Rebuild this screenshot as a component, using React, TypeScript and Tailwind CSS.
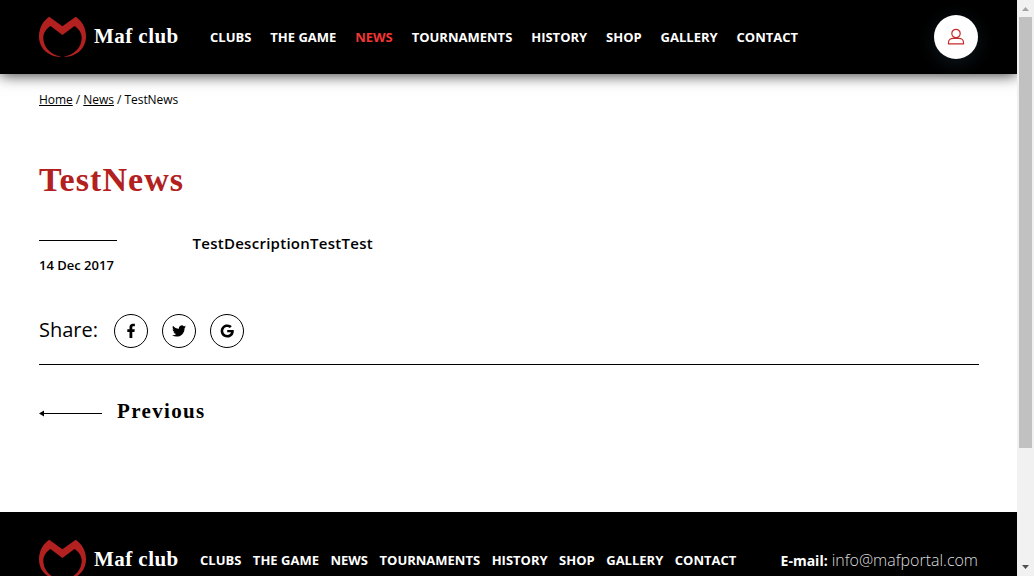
import type { ReactNode } from "react";

const links = ["CLUBS", "THE GAME", "NEWS", "TOURNAMENTS", "HISTORY", "SHOP", "GALLERY", "CONTACT"];

function Logo() {
  return (
    <a className="flex h-[42px] w-[152px] shrink-0 items-center">
      <svg className="h-[42px] w-[47px] shrink-0" viewBox="0 0 47 42" fill="#b22020">
        <path d="M10.2.8 23.4 10.3 36.7.8C43 5 47 12 47 20.500C47 32 38 40.500 25.500 41V40.500C36 38.500 42.700 31 42.700 21.500C42.700 17 39.500 12.500 35.500 10L23.400 19 11.500 10C7.500 12.500 4.300 17 4.300 21.500C4.300 31 11 38.500 21.500 40.500V41C9 40.500 0 32 0 20.500C0 12 4 5 10.200.8Z" />
      </svg>
      <span className="relative -top-px ml-2 whitespace-nowrap font-['Liberation_Serif',serif] text-[21px] leading-[26px] font-bold tracking-[0.45px]">
        Maf club
      </span>
    </a>
  );
}

function ShareButton({ children }: { children: ReactNode }) {
  return (
    <a className="flex size-[34px] items-center justify-center rounded-full border border-black">
      <svg className="size-4" viewBox="0 0 16 16" fill="currentColor">
        {children}
      </svg>
    </a>
  );
}

function Header() {
  return (
    <header className="relative z-10 flex h-[74px] shrink-0 items-center bg-black pr-[39px] pl-[39px] text-white shadow-[0_1px_14px_rgba(0,0,0,0.8)]">
      <Logo />
      <nav className="ml-[19px] flex gap-[18.900px] text-[13px] leading-5 font-bold whitespace-nowrap">
        {links.map((link) => (
          <a key={link} className={link === "NEWS" ? "text-[#f33535]" : "text-white"}>
            {link}
          </a>
        ))}
      </nav>
      <a className="ml-auto flex size-11 items-center justify-center rounded-full bg-white shadow-[0_4px_18px_rgba(55,100,125,0.25)]">
        <svg className="size-[18px]" viewBox="0 0 18 18" fill="none" stroke="#c52b2b" strokeWidth="1.2">
          <circle cx="9" cy="5.500" r="4.200" />
          <path d="M1.500 15.900V14.300C1.500 11.900 3.700 10.300 6 10.300H12C14.300 10.300 16.500 11.900 16.500 14.300V15.900Z" />
        </svg>
      </a>
    </header>
  );
}

function Article() {
  return (
    <main className="flex h-[438px] shrink-0 flex-col pr-[38px] pl-[39px]">
      <div className="mt-4 text-xs leading-5 tracking-[-0.04px]">
        <a className="underline">Home</a> / <a className="underline">News</a> / TestNews
      </div>
      <h1 className="mt-[50px] font-['Liberation_Serif',serif] text-[34px] leading-10 font-bold tracking-[1.05px] text-[#b22020]">
        TestNews
      </h1>
      <div className="mt-[33px] flex h-[60px]">
        <div className="mt-[7px] w-[78px] border-t border-black pt-[14px] text-[13px] leading-5 font-semibold whitespace-nowrap">
          14 Dec 2017
        </div>
        <p className="ml-[75.500px] text-[15px] leading-5 font-semibold tracking-[0.270px]">TestDescriptionTestTest</p>
      </div>
      <div className="mt-[21px] flex h-[51px] items-start border-b border-black">
        <span className="w-[75px] text-[20px] leading-8">Share:</span>
        <div className="flex gap-[14px]">
          <ShareButton>
            <path d="M6.500 15V9H4.300V6.300H6.500V4.300C6.500 2 7.800.8 9.900.8C10.900.8 11.700.9 11.900.9V3.300H10.500C9.500 3.300 9.300 3.800 9.300 4.500V6.300H11.800L11.400 9H9.300V15Z" />
          </ShareButton>
          <ShareButton>
            <path d="M15 3.500C14.500 3.700 14 3.900 13.400 4C14 3.600 14.400 3.100 14.600 2.500C14 2.800 13.400 3.100 12.800 3.200A2.900 2.900 0 0 0 7.900 5.800C5.500 5.700 3.400 4.500 2 2.700C1.200 4.100 1.700 5.800 2.900 6.600C2.400 6.600 2 6.400 1.600 6.200C1.600 7.600 2.600 8.800 3.900 9.100C3.500 9.200 3.100 9.200 2.600 9.100C3 10.200 4 11.100 5.300 11.100C4.100 12.100 2.600 12.500 1 12.300C5.900 15.400 13.600 13 13.600 4.900C14.200 4.500 14.600 4.100 15 3.500Z" />
          </ShareButton>
          <ShareButton>
            <path d="M14.700 6.900H8.200V9.300H12C11.500 11 10.100 12 8.200 12A4 4 0 1 1 10.900 5L12.800 3.200A6.600 6.600 0 1 0 8.200 14.600C12.500 14.600 15.400 11.400 14.700 6.900Z" />
          </ShareButton>
        </div>
      </div>
      <a className="mt-9 flex h-6 items-center font-['Liberation_Serif',serif] text-[21px] font-bold tracking-[1.350px]">
        <svg className="mr-[15px] h-[7px] w-[63px]" viewBox="0 0 63 7">
          <path d="M0 3.500 5 0.500V3H63V4H5V6.500Z" />
        </svg>
        <span className="relative -top-px">Previous</span>
      </a>
    </main>
  );
}

function Footer() {
  return (
    <footer className="flex h-[100px] shrink-0 items-start bg-black pt-[27px] pr-[39px] pl-[39px] text-white">
      <Logo />
      <nav className="mt-[11px] ml-[9px] flex gap-[11.500px] text-[13px] leading-5 font-bold whitespace-nowrap">
        {links.map((link) => (
          <a key={link}>{link}</a>
        ))}
      </nav>
      <div className="mt-[9px] ml-auto flex items-baseline gap-1 text-[14px] leading-6 font-bold whitespace-nowrap">
        E-mail:
        <a className="text-[16px] font-light text-[#dddddd]">info@mafportal.com</a>
      </div>
    </footer>
  );
}

function Scrollbar() {
  return (
    <aside className="flex h-full w-[17px] shrink-0 flex-col items-center bg-[#f1f1f1]">
      <svg className="h-[17px] w-[17px] shrink-0" viewBox="0 0 17 17" fill="#a3a3a3">
        <path d="M5 11 8.500 7 12 11Z" />
      </svg>
      <div className="h-[431px] w-[13px] bg-[#c1c1c1]" />
      <svg className="mt-auto h-[17px] w-[17px] shrink-0" viewBox="0 0 17 17" fill="#505050">
        <path d="M5 6 8.500 10 12 6Z" />
      </svg>
    </aside>
  );
}

export default function App() {
  return (
    <div className="flex h-[576px] w-[1034px] overflow-hidden bg-white font-['Open_Sans',sans-serif] text-black">
      <div className="flex h-full w-[1017px] shrink-0 flex-col overflow-hidden">
        <Header />
        <Article />
        <Footer />
      </div>
      <Scrollbar />
    </div>
  );
}
